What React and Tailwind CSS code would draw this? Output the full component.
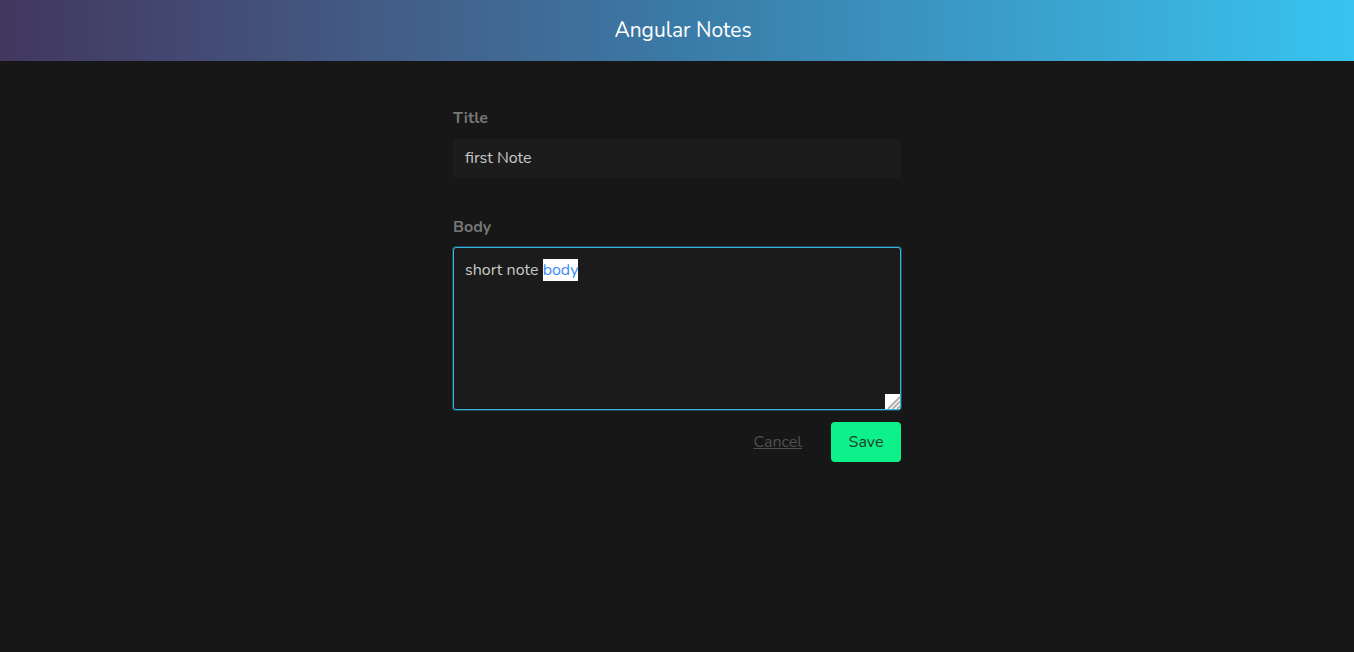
import React from 'react';

const font = { fontFamily: 'Nunito, Lato, "Open Sans", sans-serif' };

const ResizeGrip = () => (
  <svg width="15" height="15" viewBox="0 0 15 15" className="absolute right-0 bottom-0">
    <rect width="15" height="15" fill="#ffffff" />
    <path d="M15 3 L3 15 M15 7.5 L7.5 15 M15 12 L12 15" stroke="#b0b0b0" strokeWidth="2" />
  </svg>
);

const App = () => {
  return (
    <div className="min-h-screen bg-[#171717]" style={font}>
      {/* header */}
      <header className="h-[61px] pl-3 pt-px flex items-center justify-center bg-gradient-to-r from-[#41375f] via-[#3a7aa6] to-[#37c4f0]">
        <h1 className="text-[21px] text-white">Angular Notes</h1>
      </header>

      <div className="w-[448px] mx-auto pt-[45px]">
        <label className="block text-[16px] font-bold text-[#777777] leading-[24px]">Title</label>
        <div className="mt-[9px] h-[39px] rounded bg-[#1c1c1c] px-3 pb-px flex items-center text-[16px] text-[#c9c9c9]">
          first Note
        </div>

        <label className="block mt-[37px] text-[16px] font-bold text-[#777777] leading-[24px]">Body</label>
        <div className="mt-[8px] relative h-[163px] rounded-[3px] border border-[#38b6dc] bg-[#1b1b1b] shadow-[0_0_0_1px_#1d4a5a] px-[11px] pt-[10px] text-[16px] text-[#c9c9c9]">
          short note <span className="bg-white text-[#3d8cf0]">body</span>
          <ResizeGrip />
        </div>

        <div className="mt-3 flex items-center justify-end">
          <a href="#" className="text-[16px] text-[#4f4f4f] underline mr-[29px]">Cancel</a>
          <button className="h-[40px] w-[70px] rounded bg-[#0ef08a] text-[16px] text-[#1c3f2c]">Save</button>
        </div>
      </div>
    </div>
  );
};

export default App;
